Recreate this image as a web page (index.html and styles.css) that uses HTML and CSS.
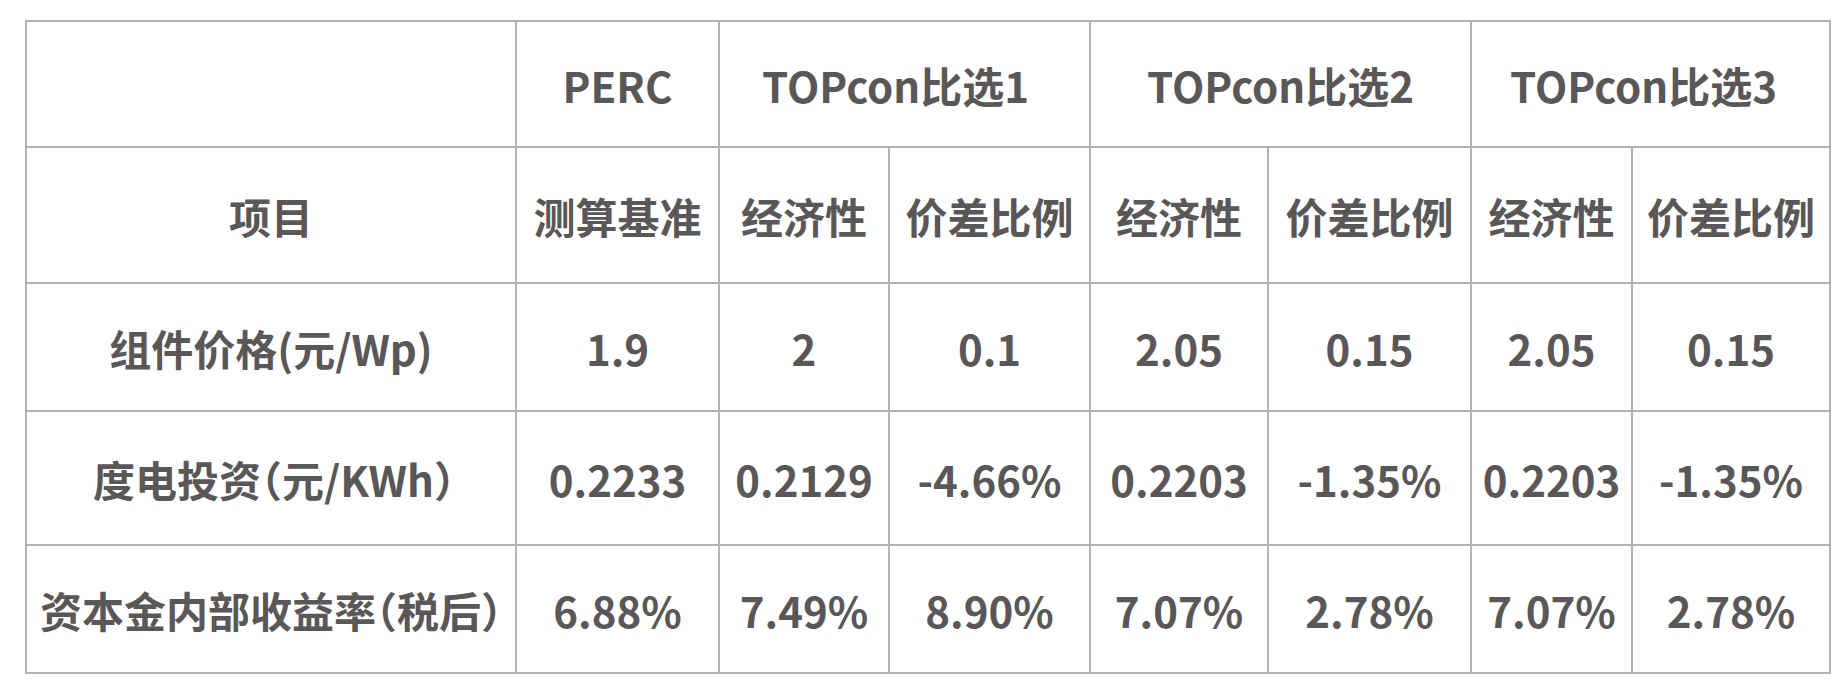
FILE: index.html
```html
<!DOCTYPE html>
<html lang="zh-CN">
<head>
<meta charset="utf-8">
<title>PERC vs TOPcon</title>
<link rel="stylesheet" href="styles.css">
</head>
<body>
<table class="cmp">
  <colgroup>
    <col class="c-label">
    <col class="c-perc">
    <col class="c-e1">
    <col class="c-d1">
    <col class="c-e2">
    <col class="c-d2">
    <col class="c-e3">
    <col class="c-d3">
  </colgroup>
  <tr class="r1">
    <td></td>
    <td>PERC</td>
    <td colspan="2" class="pad-r18">TOPcon比选1</td>
    <td colspan="2">TOPcon比选2</td>
    <td colspan="2" class="pad-r14">TOPcon比选3</td>
  </tr>
  <tr class="r2">
    <td>项目</td>
    <td>测算基准</td>
    <td>经济性</td>
    <td>价差比例</td>
    <td>经济性</td>
    <td>价差比例</td>
    <td>经济性</td>
    <td>价差比例</td>
  </tr>
  <tr class="r3">
    <td>组件价格(元/Wp)</td>
    <td>1.9</td>
    <td>2</td>
    <td>0.1</td>
    <td>2.05</td>
    <td>0.15</td>
    <td>2.05</td>
    <td>0.15</td>
  </tr>
  <tr class="r4">
    <td class="pad-l6">度电投资（元/KWh）</td>
    <td>0.2233</td>
    <td>0.2129</td>
    <td>-4.66%</td>
    <td>0.2203</td>
    <td>-1.35%</td>
    <td>0.2203</td>
    <td>-1.35%</td>
  </tr>
  <tr class="r5">
    <td>资本金内部收益率（税后）</td>
    <td>6.88%</td>
    <td>7.49%</td>
    <td>8.90%</td>
    <td>7.07%</td>
    <td>2.78%</td>
    <td>7.07%</td>
    <td>2.78%</td>
  </tr>
</table>
</body>
</html>
```
FILE: styles.css
```css
html, body {
  margin: 0;
  padding: 0;
  background: #ffffff;
}
body {
  padding: 20px 0 0 25px;
}
.cmp {
  border-collapse: collapse;
  table-layout: fixed;
  width: 1804px;
  font-family: "Noto Sans CJK SC", "Noto Sans", sans-serif;
  font-weight: 700;
  font-size: 42px;
  font-feature-settings: "halt" 1;
  color: #595757;
}
.cmp td {
  border: 2px solid #b3b3b3;
  text-align: center;
  vertical-align: middle;
  padding: 0;
  white-space: nowrap;
}
.cmp td.pad-r18 { padding-right: 18px; }
.cmp td.pad-r14 { padding-right: 14px; }
.cmp td.pad-l6 { padding-left: 6px; }
.c-label { width: 490px; }
.c-perc { width: 203px; }
.c-e1 { width: 170px; }
.c-d1 { width: 201px; }
.c-e2 { width: 178px; }
.c-d2 { width: 203px; }
.c-e3 { width: 161px; }
.c-d3 { width: 198px; }
.r1 { height: 126px; }
.r2 { height: 136px; }
.r3 { height: 128px; }
.r4 { height: 134px; }
.r5 { height: 128px; }
```
